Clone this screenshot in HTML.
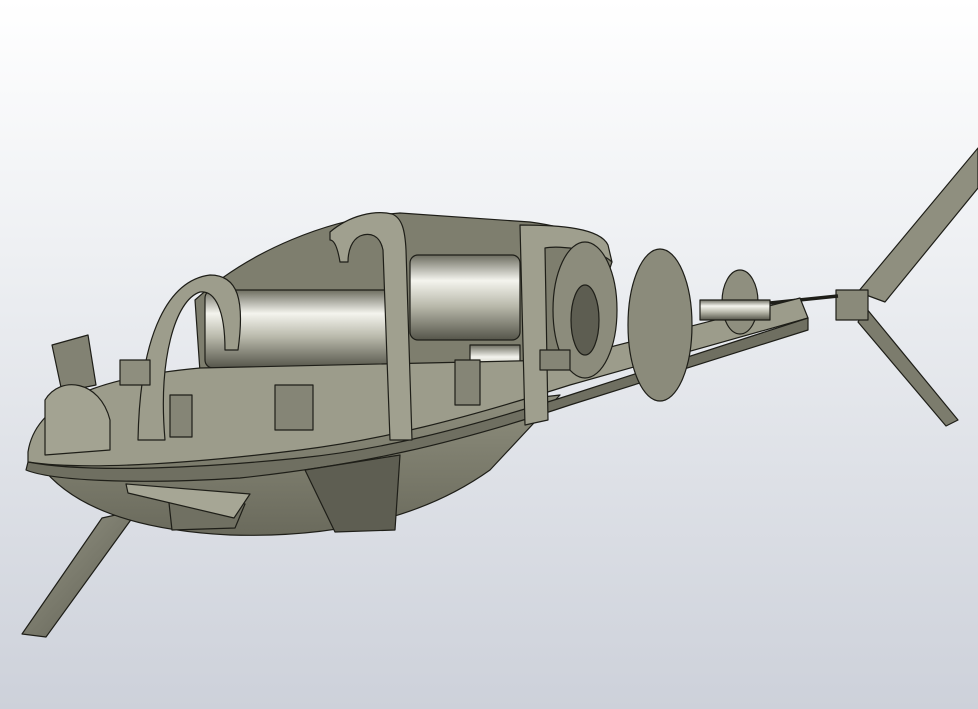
<!DOCTYPE html>
<html><head><meta charset="utf-8"><style>
html,body{margin:0;padding:0;width:978px;height:709px;overflow:hidden}
svg{display:block}
</style></head><body>
<svg width="978" height="709" viewBox="0 0 978 709" xmlns="http://www.w3.org/2000/svg">
<defs>
<linearGradient id="bg" x1="0" y1="0" x2="0" y2="1">
<stop offset="0" stop-color="#ffffff"/><stop offset="0.35" stop-color="#eef0f3"/><stop offset="1" stop-color="#cdd1da"/></linearGradient>
<linearGradient id="cyl" x1="0" y1="0" x2="0" y2="1">
<stop offset="0" stop-color="#6d6d60"/><stop offset="0.3" stop-color="#f4f4ee"/><stop offset="0.6" stop-color="#b9b9ab"/><stop offset="1" stop-color="#55554a"/></linearGradient>
<linearGradient id="hull" x1="0" y1="0" x2="0" y2="1">
<stop offset="0" stop-color="#8e8e7d"/><stop offset="1" stop-color="#6a6a5c"/></linearGradient>
<linearGradient id="fin" x1="0" y1="0" x2="1" y2="1">
<stop offset="0" stop-color="#9a9a8a"/><stop offset="1" stop-color="#5a5a4e"/></linearGradient>
</defs>
<rect width="978" height="709" fill="url(#bg)"/>
<g stroke="#1e1e18" stroke-width="1.2" stroke-linejoin="round">
<polygon points="22,634 102,518 138,510 46,637" fill="url(#fin)"/>
<path d="M40,465 C70,505 130,530 230,535 C330,538 420,520 490,470 L560,395 L40,455 Z" fill="url(#hull)"/>
<polygon points="858,292 978,148 978,188 885,302" fill="#8f8f7f"/>
<polygon points="866,308 958,420 946,426 858,322" fill="#7c7c6d"/>
<rect x="836" y="290" width="32" height="30" fill="#8a8a7a"/>
<line x1="770" y1="303" x2="838" y2="296" stroke-width="3.5"/>
<path d="M195,300 C250,250 330,218 400,213 L530,222 C575,228 600,240 612,262 L580,360 L200,372 Z" fill="#7e7e6e"/>
<rect x="205" y="290" width="200" height="78" rx="8" fill="url(#cyl)"/>
<rect x="410" y="255" width="110" height="85" rx="8" fill="url(#cyl)"/>
<rect x="470" y="345" width="50" height="40" fill="url(#cyl)"/>
<path d="M28,452 C35,405 90,378 200,368 L560,360 L800,298 L808,318 L570,385 C460,420 380,440 300,450 C180,465 80,470 28,462 Z" fill="#9c9c8b"/>
<path d="M28,462 C80,472 180,470 300,458 C380,450 460,430 570,395 L808,318 L808,330 L570,405 C450,445 360,465 240,478 C130,485 50,480 26,470 Z" fill="#6f6f61"/>
<path d="M52,345 L88,335 L96,385 L62,392 Z" fill="#828273"/>
<path d="M45,400 C60,375 100,380 110,420 L110,450 L45,455 Z" fill="#a3a392"/>
<path d="M138,440 C140,330 170,280 210,275 C238,275 245,300 238,350 L225,350 C225,310 215,290 200,292 C175,300 158,360 165,440 Z" fill="#9d9d8c"/>
<path d="M330,232 C350,215 375,210 392,214 C402,218 405,230 406,250 L412,440 L390,440 L383,250 C380,235 370,232 360,236 C352,240 348,250 348,262 L340,262 C338,250 335,240 330,240 Z" fill="#a0a08f"/>
<path d="M305,470 L400,455 L395,530 L335,532 Z" fill="#5e5e52"/>
<path d="M520,225 C560,225 600,228 608,245 L612,262 C600,250 560,245 545,248 L548,420 L525,425 Z" fill="#9f9f8e"/>
<path d="M168,494 L245,504 L235,528 L172,530 Z" fill="#707062"/>
<ellipse cx="585" cy="310" rx="32" ry="68" fill="#8c8c7c"/>
<ellipse cx="585" cy="320" rx="14" ry="35" fill="#5d5d51"/>
<ellipse cx="660" cy="325" rx="32" ry="76" fill="#8b8b7b"/>
<ellipse cx="740" cy="302" rx="18" ry="32" fill="#8f8f7f"/>
<rect x="700" y="300" width="70" height="20" fill="url(#cyl)"/>
<rect x="120" y="360" width="30" height="25" fill="#8e8e7e"/>
<rect x="170" y="395" width="22" height="42" fill="#858576"/>
<rect x="275" y="385" width="38" height="45" fill="#858576"/>
<rect x="455" y="360" width="25" height="45" fill="#858576"/>
<rect x="540" y="350" width="30" height="20" fill="#858576"/>
<polygon points="126,484 250,494 234,518 128,493" fill="#a6a695"/>
</g>
</svg>
</body></html>
